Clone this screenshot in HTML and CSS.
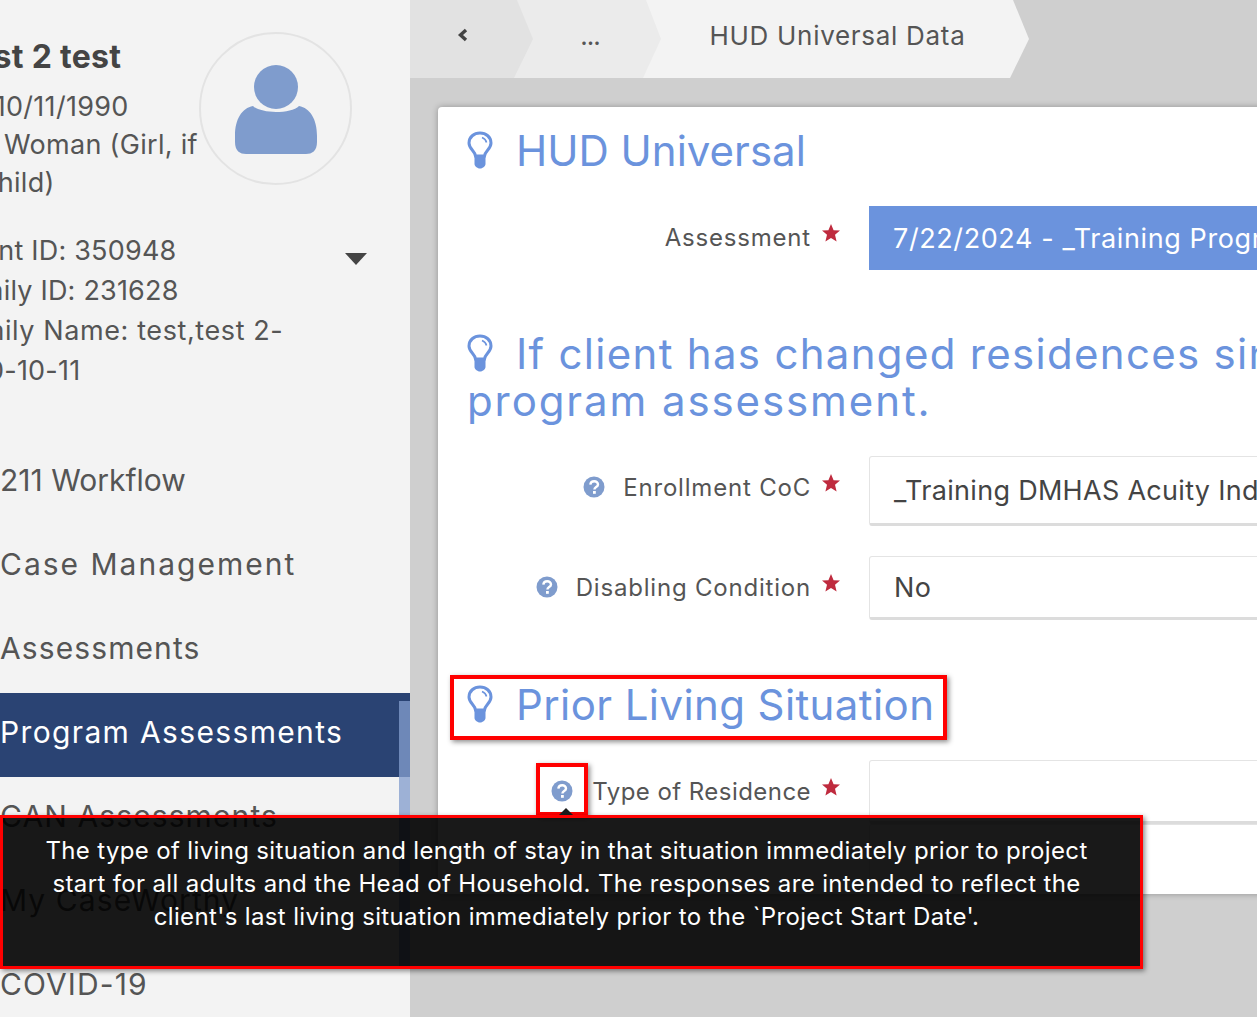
FILE: index.html
```html
<!DOCTYPE html>
<html lang="en">
<head>
    <meta charset="UTF-8">
    <title>HUD Universal Data</title>
    <link rel="stylesheet" href="styles.css">
</head>
<body>
    <div class="page">
        <div class="sidebar">
            <div class="client-head">
                <div class="client-info">
                    <div class="client-name">Test 2 test</div>
                    <div class="client-dob">DOB: 10/11/1990</div>
                    <div class="client-gender">Woman (Girl, if<br>child)</div>
                </div>
                <div class="avatar">
                    <svg width="84" height="92" viewBox="0 0 84 92">
                        <circle cx="42" cy="23" r="22" fill="#7f9ccd"/>
                        <path d="M19 42 C27 50 57 50 65 42 C76 44 83 55 83 72 L83 78 C83 87 78 90 72 90 L12 90 C6 90 1 87 1 78 L1 72 C1 55 8 44 19 42 Z" fill="#7f9ccd"/>
                    </svg>
                </div>
            </div>
            <div class="client-ids">
                <div class="client-id-list">
                    <div>Client ID: 350948</div>
                    <div>Family ID: 231628</div>
                    <div><span class="family-name">Family Name: test,test 2-</span><br><span class="family-date">1990-10-11</span></div>
                </div>
                <div class="caret"></div>
            </div>
            <div class="nav">
                <div class="nav-item nav-tight">211 Workflow</div>
                <div class="nav-item nav-wide">Case Management</div>
                <div class="nav-item">Assessments</div>
                <div class="nav-item active">Program Assessments</div>
                <div class="nav-item">CAN Assessments</div>
                <div class="nav-item">My CaseWorthy</div>
                <div class="nav-item">COVID-19</div>
            </div>
            <div class="scroll-thumb"></div>
        </div>

        <div class="main">
            <div class="crumbs">
                <div class="crumb crumb-back">
                    <svg width="12" height="14" viewBox="0 0 12 14"><path d="M9 2 L3.5 7 L9 12" fill="none" stroke="#444" stroke-width="3.4"/></svg>
                </div>
                <div class="crumb crumb-more">...</div>
                <div class="crumb crumb-current">HUD Universal Data</div>
            </div>

            <div class="card">
                <h2 class="heading">
                    <svg class="bulb" width="26" height="38" viewBox="0 0 26 38"><use href="#bulb"/></svg>HUD Universal
                </h2>
                <div class="row">
                    <div class="label-col">
                        <span class="label">Assessment</span>
                        <svg class="star" width="18" height="18" viewBox="0 0 18 18"><use href="#star"/></svg>
                    </div>
                    <div class="control control-blue">7/22/2024 - _Training Program Assessment</div>
                </div>

                <h2 class="heading heading-wrap">
                    <svg class="bulb" width="26" height="38" viewBox="0 0 26 38"><use href="#bulb"/></svg>If client has changed residences since last<br><span class="heading-line">program assessment.</span>
                </h2>
                <div class="row row-tall">
                    <div class="label-col">
                        <svg class="help" width="22" height="22" viewBox="0 0 22 22"><use href="#help"/></svg>
                        <span class="label">Enrollment CoC</span>
                        <svg class="star" width="18" height="18" viewBox="0 0 18 18"><use href="#star"/></svg>
                    </div>
                    <div class="control">_Training DMHAS Acuity Index Program</div>
                </div>
                <div class="row row-gap">
                    <div class="label-col">
                        <svg class="help" width="22" height="22" viewBox="0 0 22 22"><use href="#help"/></svg>
                        <span class="label">Disabling Condition</span>
                        <svg class="star" width="18" height="18" viewBox="0 0 18 18"><use href="#star"/></svg>
                    </div>
                    <div class="control">No</div>
                </div>

                <div class="marked-heading">
                    <h2 class="heading">
                        <svg class="bulb" width="26" height="38" viewBox="0 0 26 38"><use href="#bulb"/></svg>Prior Living Situation
                    </h2>
                </div>
                <div class="row">
                    <div class="label-col">
                        <span class="marked-help">
                            <svg class="help" width="22" height="22" viewBox="0 0 22 22"><use href="#help"/></svg>
                        </span>
                        <span class="label label-short">Type of Residence</span>
                        <svg class="star" width="18" height="18" viewBox="0 0 18 18"><use href="#star"/></svg>
                    </div>
                    <div class="control"></div>
                </div>
                <div class="row">
                    <div class="label-col"></div>
                    <div class="control control-last"></div>
                </div>
            </div>
        </div>

        <div class="tooltip">
            <div class="tooltip-arrow"></div>
            The type of living situation and length of stay in that situation immediately prior to project<br>
            start for all adults and the Head of Household. The responses are intended to reflect the<br>
            client's last living situation immediately prior to the `Project Start Date'.
        </div>
    </div>

    <!-- shared icons -->
    <svg class="icon-defs" width="0" height="0">
        <defs>
            <g id="bulb">
                <path d="M8.5 25 C8 20 2 18 2 12 C2 6 7 2 13 2 C19 2 24 6 24 12 C24 18 18 20 17.5 25 Z" fill="none" stroke="#6b93dd" stroke-width="3"/>
                <path d="M15 6.5 C17.5 7.5 19 9 19.5 11.5" fill="none" stroke="#6b93dd" stroke-width="1.6"/>
                <path d="M7.5 26 L18.5 26 L18.5 33 C18.5 35 16 37.5 13 37.5 C10 37.5 7.5 35 7.5 33 Z" fill="#6b93dd"/>
            </g>
            <polygon id="star" points="9,0 11.6,6.2 18,6.6 13,10.8 14.6,17.5 9,13.9 3.4,17.5 5,10.8 0,6.6 6.4,6.2" fill="#bf2b3e"/>
            <g id="help">
                <circle cx="11" cy="11" r="10.5" fill="#7f9ccd"/>
                <path d="M7.3 8.6 C7.6 6.4 9.2 5.2 11.2 5.2 C13.4 5.2 15 6.6 15 8.4 C15 11 11.4 11 11.4 13.4" fill="none" stroke="#fff" stroke-width="2.4"/>
                <rect x="10" y="15" width="2.8" height="2.8" fill="#fff"/>
            </g>
        </defs>
    </svg>
</body>
</html>
```

FILE: styles.css
```css
html, body {
    margin: 0;
    padding: 0;
    height: 100%;
    overflow: hidden;
}
body {
    font-family: Inter, "Noto Sans", sans-serif;
    color: #555;
}
.page {
    position: relative;
    display: flex;
    width: 1257px;
    height: 1017px;
    overflow: hidden;
    background-color: #cfcfcf;
}
.icon-defs {
    display: block;
}

/* sidebar */
.sidebar {
    position: relative;
    flex: 0 0 410px;
    overflow: hidden;
    background-color: #f3f3f3;
}
.client-head {
    display: flex;
    height: 231px;
    padding-top: 32px;
    box-sizing: border-box;
}
.client-info {
    flex: 0 0 217px;
    margin-left: -18px;
    font-size: 27px;
    line-height: 38px;
    letter-spacing: 0.3px;
    white-space: nowrap;
}
.client-name {
    margin: 5px 0 11px -27px;
    font-size: 32px;
    font-weight: 700;
    line-height: 40px;
    color: #444;
}
.client-dob {
    margin-left: -62px;
}
.client-gender {
    text-indent: 22px;
}
.avatar {
    display: flex;
    align-items: center;
    justify-content: center;
    flex: 0 0 auto;
    width: 153px;
    height: 153px;
    box-sizing: border-box;
    padding-top: 2px;
    border: 2px solid #e3e3e3;
    border-radius: 50%;
}
.client-ids {
    display: flex;
    height: 210px;
    font-size: 27px;
    line-height: 40px;
    letter-spacing: 0.2px;
}
.client-id-list {
    flex: 0 0 396px;
    margin-left: -51px;
    white-space: nowrap;
}
.family-name {
    letter-spacing: 0.6px;
}
.family-date {
    margin-left: -7px;
}
.caret {
    width: 0;
    height: 0;
    margin-top: 22px;
    border-top: 12px solid #444;
    border-left: 11px solid transparent;
    border-right: 11px solid transparent;
}
.nav-item {
    height: 84px;
    font-size: 30px;
    line-height: 79px;
    letter-spacing: 1.1px;
    white-space: nowrap;
}
.nav-tight {
    letter-spacing: 0;
}
.nav-wide {
    letter-spacing: 2px;
}
.nav-item.active {
    background-color: #2a4373;
    color: #fff;
    letter-spacing: 1.35px;
}
.scroll-thumb {
    position: absolute;
    top: 701px;
    right: 0;
    width: 11px;
    height: 265px;
    background-color: rgba(131, 157, 206, 0.77);
}

/* breadcrumb */
.main {
    flex: 1;
    min-width: 0;
}
.crumbs {
    display: flex;
    height: 78px;
}
.crumb {
    display: flex;
    align-items: center;
    justify-content: center;
    box-sizing: border-box;
    height: 78px;
    padding-bottom: 8px;
    font-size: 26px;
    letter-spacing: 0.7px;
}
.crumb-back {
    position: relative;
    z-index: 3;
    width: 123px;
    padding-right: 18px;
    background-color: #e2e2e2;
    clip-path: polygon(0 0, 107px 0, 123px 39px, 104px 78px, 0 78px);
}
.crumb-more {
    position: relative;
    z-index: 2;
    width: 147px;
    margin-left: -19px;
    padding-left: 5px;
    letter-spacing: -1px;
    background-color: #ebebeb;
    clip-path: polygon(0 0, 132px 0, 147px 39px, 129px 78px, 0 78px);
}
.crumb-current {
    width: 386px;
    margin-left: -18px;
    padding-left: 3px;
    background-color: #f3f3f3;
    clip-path: polygon(0 0, 370px 0, 386px 39px, 367px 78px, 0 78px);
}

/* card */
.card {
    width: 900px;
    height: 787px;
    box-sizing: border-box;
    margin: 29px 0 0 28px;
    padding-top: 20px;
    background-color: #fff;
    border-radius: 4px;
    box-shadow: 0 0 6px rgba(0, 0, 0, 0.3);
}
.heading {
    margin: 0 0 32px 29px;
    font-size: 42px;
    font-weight: 400;
    line-height: 47px;
    color: #6b93dd;
    white-space: nowrap;
}
.heading-wrap {
    margin-top: 60px;
    margin-bottom: 32px;
    letter-spacing: 1.3px;
}
.heading-line {
    letter-spacing: 1.9px;
}
.bulb {
    margin-right: 23px;
    vertical-align: -3px;
}
.row {
    display: flex;
    height: 64px;
}
.row-tall {
    height: 70px;
}
.row-tall .label-col {
    padding-bottom: 8px;
}
.row-gap {
    margin-top: 30px;
}
.label-col {
    display: flex;
    align-items: center;
    justify-content: flex-end;
    flex: 0 0 431px;
    box-sizing: border-box;
    padding-right: 29px;
    padding-bottom: 2px;
}
.label {
    font-size: 24px;
    letter-spacing: 0.8px;
}
.label-short {
    letter-spacing: 0.45px;
}
.help {
    flex: 0 0 auto;
    margin-right: 18px;
}
.star {
    flex: 0 0 auto;
    margin: -8px 0 0 11px;
}
.control {
    flex: 1;
    display: flex;
    align-items: center;
    box-sizing: border-box;
    padding-left: 24px;
    font-size: 27px;
    letter-spacing: 0.3px;
    white-space: nowrap;
    color: #444;
    border: 1px solid #e4e4e4;
    border-bottom: 3px solid #dcdcdc;
    border-radius: 3px;
}
.control-blue {
    border: 0;
    border-radius: 0;
    background-color: #6b93dd;
    color: #fff;
    letter-spacing: 0.6px;
}
.control-last {
    border-bottom: 0;
}

/* highlighted parts */
.marked-heading {
    width: 497px;
    height: 65px;
    box-sizing: border-box;
    margin: 55px 0 20px 12px;
    padding-top: 2px;
    border: 4px solid #f00;
    box-shadow: 2px 2px 5px rgba(0, 0, 0, 0.45);
}
.marked-heading .heading {
    margin: 0 0 0 13px;
    letter-spacing: 0.4px;
}
.marked-help {
    display: flex;
    align-items: center;
    justify-content: center;
    box-sizing: border-box;
    width: 52px;
    height: 53px;
    margin: -3px 4px 0 0;
    padding-top: 2px;
    border: 4px solid #f00;
    box-shadow: 2px 2px 5px rgba(0, 0, 0, 0.45);
}
.marked-help .help {
    margin: 0;
}
.tooltip {
    position: absolute;
    left: 0;
    top: 815px;
    width: 1143px;
    height: 154px;
    box-sizing: border-box;
    padding: 16px 10px 0 0;
    border: 3px solid #f00;
    background-color: rgba(0, 0, 0, 0.9);
    box-shadow: 2px 2px 5px rgba(0, 0, 0, 0.45);
    color: #fff;
    font-size: 24px;
    line-height: 33px;
    letter-spacing: 0.35px;
    text-align: center;
    white-space: nowrap;
}
.tooltip-arrow {
    position: absolute;
    top: -10px;
    left: 556px;
    width: 0;
    height: 0;
    border-bottom: 7px solid #1a1a1a;
    border-left: 7px solid transparent;
    border-right: 7px solid transparent;
}
```
